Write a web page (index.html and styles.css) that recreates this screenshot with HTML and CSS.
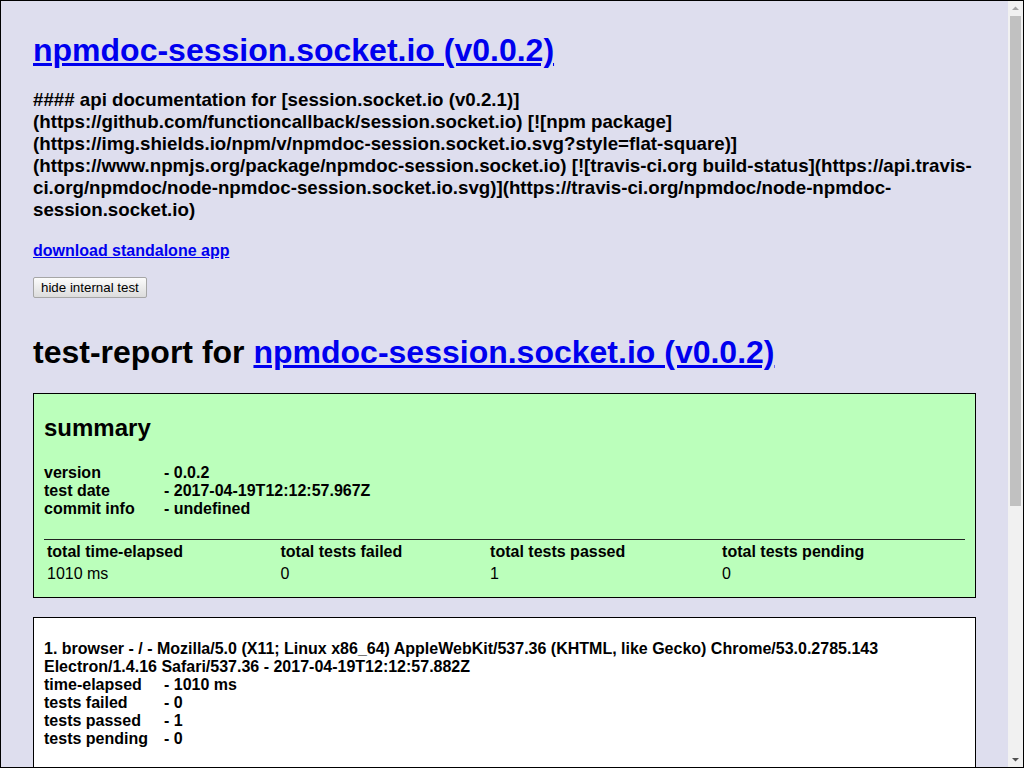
FILE: index.html
```html
<!DOCTYPE html>
<html lang="en">
<head>
<meta charset="utf-8">
<title>npmdoc-session.socket.io (v0.0.2)</title>
<link rel="stylesheet" href="styles.css">
</head>
<body>
<div class="page">
  <h1 class="title"><a href="#">npmdoc-session.socket.io (v0.0.2)</a></h1>
  <h3 class="desc">#### api documentation for [session.socket.io (v0.2.1)](https://github.com/functioncallback/session.socket.io) [![npm package](https://img.shields.io/npm/v/npmdoc-session.socket.io.svg?style=flat-square)](https://www.npmjs.org/package/npmdoc-session.socket.io) [![travis-ci.org build-status](https://api.travis-ci.org/npmdoc/node-npmdoc-session.socket.io.svg)](https://travis-ci.org/npmdoc/node-npmdoc-session.socket.io)</h3>
  <div class="download"><a href="#">download standalone app</a></div>
  <button class="toggle" type="button">hide internal test</button>

  <div class="report">
    <h1 class="report-title">test-report for <a href="#">npmdoc-session.socket.io (v0.0.2)</a></h1>

    <div class="platform passed">
      <h2 class="summary-title">summary</h2>
      <div class="info">
        <span>version</span><span>- 0.0.2</span>
        <span>test date</span><span>- 2017-04-19T12:12:57.967Z</span>
        <span>commit info</span><span>- undefined</span>
      </div>
      <table class="totals">
        <thead>
          <tr><th>total time-elapsed</th><th>total tests failed</th><th>total tests passed</th><th>total tests pending</th></tr>
        </thead>
        <tbody>
          <tr><td>1010 ms</td><td>0</td><td>1</td><td>0</td></tr>
        </tbody>
      </table>
    </div>

    <div class="platform plain">
      <div class="platform-name">1. browser - / - Mozilla/5.0 (X11; Linux x86_64) AppleWebKit/537.36 (KHTML, like Gecko) Chrome/53.0.2785.143 Electron/1.4.16 Safari/537.36 - 2017-04-19T12:12:57.882Z</div>
      <div class="info">
        <span>time-elapsed</span><span>- 1010 ms</span>
        <span>tests failed</span><span>- 0</span>
        <span>tests passed</span><span>- 1</span>
        <span>tests pending</span><span>- 0</span>
      </div>
    </div>
  </div>
</div>
<div class="scrollbar" aria-hidden="true">
  <div class="sb-button">
    <svg width="15" height="15" viewBox="0 0 15 15"><path d="M4 9 L7.5 5.5 L11 9 Z" fill="#a3a3a3"/></svg>
  </div>
  <div class="sb-track">
    <div class="sb-thumb"></div>
  </div>
  <div class="sb-button">
    <svg width="15" height="15" viewBox="0 0 15 15"><path d="M4 6 L7.5 9.5 L11 6 Z" fill="#505050"/></svg>
  </div>
</div>
</body>
</html>
```

FILE: styles.css
```css
html {
  height: 100%;
  box-sizing: border-box;
  border: 1px solid #000;
  overflow: hidden;
  background: #dedeee;
}

body {
  margin: 0;
  height: 100%;
  display: flex;
  background: #dedeee;
  font-family: "Liberation Sans", Arial, Helvetica, sans-serif;
  color: #000;
}

a {
  color: #0000ee;
  text-decoration: underline;
}

.page {
  flex: 1;
  min-width: 0;
  overflow: hidden;
  padding: 0 32px;
}

.scrollbar {
  flex: 0 0 15px;
  display: flex;
  flex-direction: column;
  background: #f1f1f1;
}

.sb-button {
  height: 15px;
  flex: 0 0 15px;
}

.sb-button svg {
  display: block;
}

.sb-track {
  flex: 1;
  padding: 0 2px;
}

.sb-thumb {
  height: 490px;
  background: #c1c1c1;
}

.title {
  font-size: 32px;
  line-height: 37px;
  font-weight: bold;
  margin: 31px 0 0;
}

.desc {
  font-size: 18.72px;
  line-height: 22px;
  font-weight: bold;
  margin: 20px 0 0;
}

.download {
  font-size: 16px;
  line-height: 18px;
  font-weight: bold;
  margin-top: 21px;
}

.toggle {
  display: block;
  margin-top: 17px;
  height: 21px;
  padding: 0 7px;
  font-family: "Liberation Sans", Arial, sans-serif;
  font-size: 13.33px;
  color: #000;
  background: linear-gradient(#fcfcfc, #dcdcdc);
  border: 1px solid #a6a6a6;
  border-radius: 2px;
}

.report-title {
  font-size: 32px;
  line-height: 37px;
  font-weight: bold;
  margin: 36px 0 22px;
}

.platform {
  border: 1px solid #000;
  padding: 0 10px 10px;
  font-weight: bold;
  font-size: 16px;
}

.platform + .platform {
  margin-top: 19px;
}

.passed {
  background: #bbffbb;
}

.plain {
  background: #fff;
  padding-bottom: 80px;
}

.summary-title {
  font-size: 24px;
  line-height: 28px;
  margin: 20px 0 22px;
}

.info {
  display: grid;
  grid-template-columns: 120px auto;
  justify-content: start;
  line-height: 18px;
}

.platform-name {
  line-height: 18px;
  margin-top: 22px;
}

.totals {
  width: 100%;
  margin-top: 21px;
  border-top: 1px solid #222;
  border-spacing: 2px;
  font-size: 16px;
}

.totals th,
.totals td {
  padding: 1px;
  text-align: left;
  line-height: 18.4px;
}

.totals td {
  font-weight: normal;
}
```
